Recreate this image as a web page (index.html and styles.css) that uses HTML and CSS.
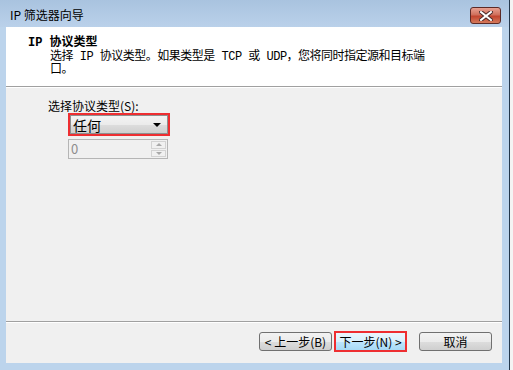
FILE: index.html
```html
<!DOCTYPE html>
<html lang="zh-CN">
<head>
  <meta charset="UTF-8" />
  <title>IP 筛选器向导</title>
  <link rel="stylesheet" href="styles.css">
</head>
<body>
  <div class="window">
    <div class="titlebar">
      <span class="title">IP 筛选器向导</span>
      <button class="close-btn" type="button">
        <svg width="14" height="10" viewBox="0 0 14 10">
          <path d="M2 1 L12 9 M12 1 L2 9" stroke="#4a2a2a" stroke-width="4" stroke-linecap="square"/>
          <path d="M2 1 L12 9 M12 1 L2 9" stroke="#ffffff" stroke-width="2" stroke-linecap="square"/>
        </svg>
      </button>
    </div>

    <div class="client">
      <div class="header">
        <h2>IP 协议类型</h2>
        <p class="desc">
          <span class="desc-line">选择 IP 协议类型。如果类型是 TCP 或 UDP，您将同时指定源和目标端</span>
          <span class="desc-line">口。</span>
        </p>
      </div>

      <div class="content">
        <label class="field-label">选择协议类型(S):</label>
        <div class="marked combo-wrap">
          <div class="combo">
            <span>任何</span>
            <span class="arrow"></span>
          </div>
        </div>
        <div class="spinner">
          <span class="spin-value">0</span>
          <div class="spin-btns">
            <span class="spin-up"></span>
            <span class="spin-down"></span>
          </div>
        </div>
      </div>

      <div class="footer">
        <button class="btn" type="button">&lt; 上一步(B)</button>
        <button class="btn btn-next" type="button">下一步(N) &gt;</button>
        <button class="btn btn-cancel" type="button">取消</button>
      </div>
    </div>
  </div>
</body>
</html>
```

FILE: styles.css
```css
* {
  margin: 0;
  padding: 0;
  box-sizing: border-box;
}

body {
  width: 513px;
  height: 370px;
  background: #f4f4f4;
  font-family: "Liberation Mono", "Noto Sans CJK SC", monospace;
  font-size: 12px;
  color: #000;
  overflow: hidden;
}

.window {
  width: 510px;
  height: 370px;
  background: #bcd4ec;
  border-right: 1px solid #23374c;
  display: flex;
  flex-direction: column;
  padding: 0 7px 7px 6px;
}

/* title bar */
.titlebar {
  height: 27px;
  display: flex;
  align-items: flex-start;
  justify-content: space-between;
  margin: 0 -7px 0 -6px;
  padding: 0 8px 0 10px;
  background: linear-gradient(#a9c3df, #bad1ea);
}

.title {
  font-family: "Noto Sans CJK SC", sans-serif;
  font-size: 12px;
  line-height: 14px;
  margin-top: 8px;
  color: #000;
}

.close-btn {
  width: 31px;
  height: 17px;
  margin-top: 7px;
  border: 1px solid #5c2a26;
  border-radius: 3px;
  background: linear-gradient(#e8a192 0%, #d0705c 45%, #c2452f 55%, #d47a5c 100%);
  display: flex;
  align-items: center;
  justify-content: center;
}

/* client area */
.client {
  flex: 1;
  display: flex;
  flex-direction: column;
  background: #f0f0f0;
}

.header {
  height: 60px;
  background: #fff;
  border-bottom: 1px solid #a0a0a0;
  box-shadow: 0 1px 0 #fff;
  padding: 10px 0 0 22px;
}

.header h2 {
  font-size: 12px;
  font-weight: bold;
  line-height: 13px;
  font-family: "Liberation Mono", "Noto Sans CJK SC", monospace;
}

.desc {
  margin: 1px 0 0 22px;
  font-size: 12px;
  line-height: 13px;
  letter-spacing: -0.5px;
}

.desc-line {
  display: block;
  white-space: nowrap;
}

.content {
  flex: 1;
  padding: 12px 0 0 42px;
  display: flex;
  flex-direction: column;
  align-items: flex-start;
}

.field-label {
  font-family: "Noto Sans CJK SC", sans-serif;
  font-size: 12px;
  line-height: 13px;
}

.marked {
  border: 2px solid #ee2e31;
}

.combo-wrap {
  margin: 1px 0 0 20px;
  width: 102px;
  height: 23px;
}

.combo {
  height: 19px;
  border: 1px solid #8e8f8f;
  background: linear-gradient(#f3f3f3 0%, #ebebeb 50%, #dddddd 51%, #cfcfcf 100%);
  display: flex;
  align-items: center;
  justify-content: space-between;
  padding: 0 6px 0 2px;
  font-family: "Noto Sans CJK SC", sans-serif;
  font-size: 14px;
}

.arrow {
  width: 0;
  height: 0;
  border-left: 4px solid transparent;
  border-right: 4px solid transparent;
  border-top: 4px solid #000;
}

.spinner {
  margin: 3px 0 0 20px;
  width: 100px;
  height: 20px;
  border: 1px solid #b5b5b5;
  background: #f0f0f0;
  display: flex;
  justify-content: space-between;
}

.spin-value {
  font-family: "Noto Sans CJK SC", sans-serif;
  font-size: 13px;
  line-height: 18px;
  color: #8d8d8d;
  padding-left: 2px;
}

.spin-btns {
  width: 16px;
  display: flex;
  flex-direction: column;
  padding: 1px 1px 1px 0;
  gap: 1px;
}

.spin-up,
.spin-down {
  flex: 1;
  border: 1px solid #d2d2d2;
  display: flex;
  align-items: center;
  justify-content: center;
}

.spin-up::after,
.spin-down::after {
  content: '';
  border-left: 3px solid transparent;
  border-right: 3px solid transparent;
}

.spin-up::after {
  border-bottom: 3px solid #a8a8a8;
}

.spin-down::after {
  border-top: 3px solid #a8a8a8;
}

/* bottom buttons */
.footer {
  height: 42px;
  border-top: 1px solid #a0a0a0;
  box-shadow: inset 0 1px 0 #fff;
  display: flex;
  align-items: center;
  justify-content: flex-end;
  padding: 0 10px 2px 0;
}

.btn {
  width: 73px;
  height: 19px;
  border: 1px solid #707070;
  border-radius: 3px;
  background: linear-gradient(#f2f2f2 0%, #ebebeb 50%, #dddddd 51%, #cfcfcf 100%);
  font-family: "Noto Sans CJK SC", sans-serif;
  font-size: 12px;
  line-height: 15px;
  color: #000;
}

.btn-next {
  height: 21px;
  margin-left: 2px;
  border: 2px solid #ee2e31;
  border-radius: 0;
  background: linear-gradient(#eaf6fd 0%, #d9f0fc 50%, #bee6fd 51%, #a7d9f5 100%);
}

.btn-cancel {
  margin-left: 12px;
}
```
